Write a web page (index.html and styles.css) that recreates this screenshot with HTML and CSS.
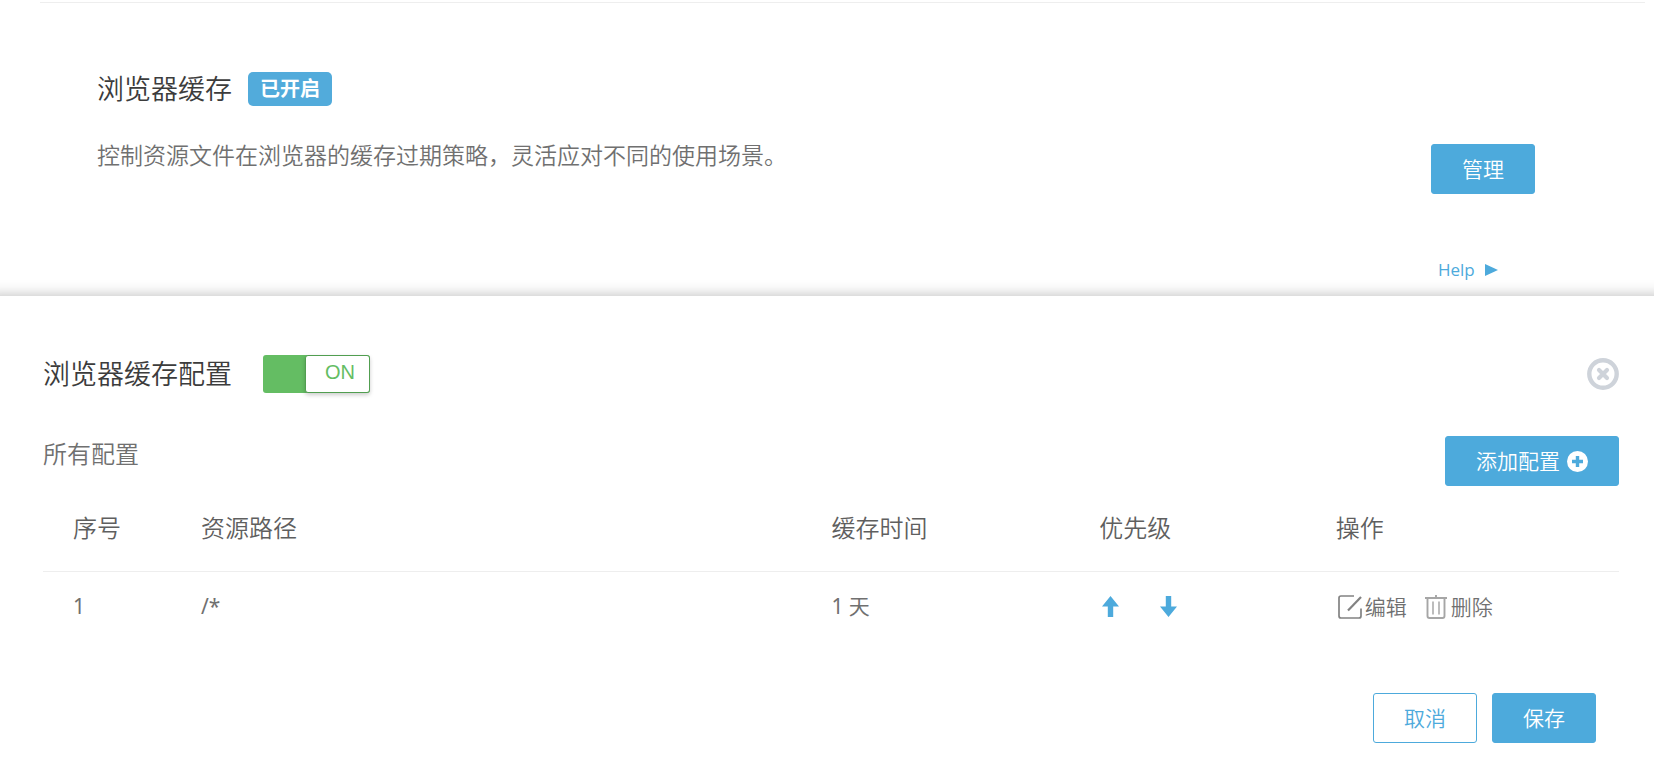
FILE: index.html
```html
<!DOCTYPE html>
<html lang="zh-CN">
<head>
<meta charset="utf-8">
<title>浏览器缓存</title>
<link rel="stylesheet" href="styles.css">
</head>
<body>
<section class="feature">
  <div class="feature-body">
    <div class="feature-text">
      <h2 class="title">浏览器缓存 <span class="badge">已开启</span></h2>
      <p class="desc">控制资源文件在浏览器的缓存过期策略，灵活应对不同的使用场景。</p>
    </div>
    <div class="feature-actions">
      <button class="btn btn-primary" type="button">管理</button>
      <a class="help" href="#help">Help
        <svg class="help-icon" viewBox="0 0 13 12" aria-hidden="true"><path d="M0 0L13 6L0 12Z"/></svg>
      </a>
    </div>
  </div>
</section>
<section class="drawer">
  <header class="drawer-head">
    <h2 class="title">浏览器缓存配置</h2>
    <label class="switch">
      <input class="switch-input" type="checkbox" checked aria-label="浏览器缓存配置">
      <span class="switch-knob">ON</span>
    </label>
    <button class="close" type="button" aria-label="关闭">
      <svg class="close-icon" viewBox="0 0 32 32" aria-hidden="true"><circle cx="16" cy="16" r="13.7" stroke-width="4.4"/><path d="M12 12l8 8M20 12l-8 8" stroke-width="4.2" stroke-linecap="round"/></svg>
    </button>
  </header>
  <div class="toolbar">
    <h3 class="subtitle">所有配置</h3>
    <button class="btn btn-primary" type="button">添加配置
      <svg class="plus-icon" viewBox="0 0 21 21" aria-hidden="true"><circle cx="10.5" cy="10.5" r="10.5" fill="#fff"/><path d="M10.5 5v11M5 10.5h11" stroke="#4daadc" stroke-width="3.4"/></svg>
    </button>
  </div>
  <table class="rules">
    <thead>
      <tr>
        <th class="col-index">序号</th>
        <th class="col-path">资源路径</th>
        <th class="col-time">缓存时间</th>
        <th class="col-order">优先级</th>
        <th>操作</th>
      </tr>
    </thead>
    <tbody>
      <tr>
        <td>1</td>
        <td>/*</td>
        <td>1 天</td>
        <td>
          <div class="order">
            <button class="icon-btn" type="button" aria-label="上移"><svg class="arrow" viewBox="0 0 17 21" aria-hidden="true"><path d="M8.5 0L17 10.5H11.2V21H5.8V10.5H0Z"/></svg></button>
            <button class="icon-btn" type="button" aria-label="下移"><svg class="arrow" viewBox="0 0 17 21" aria-hidden="true"><path d="M8.5 21L17 10.5H11.2V0H5.8V10.5H0Z"/></svg></button>
          </div>
        </td>
        <td>
          <div class="ops">
            <button class="icon-btn" type="button"><svg class="op-icon" viewBox="0 0 24 24" aria-hidden="true"><path d="M16 1H3Q1 1 1 3V21Q1 23 3 23H21Q23 23 23 21V13.5" stroke="#828282" stroke-width="1.7"/><path d="M10 15.5L23 2" stroke="#828282" stroke-width="2.2"/></svg>编辑</button>
            <button class="icon-btn" type="button"><svg class="op-icon" viewBox="0 0 24 24" aria-hidden="true"><path d="M1 3H23M12 0V3M3.5 3V21Q3.5 23 5.5 23H18.5Q20.5 23 20.5 21V3" stroke="#a6a6a6" stroke-width="1.9"/><path d="M9 6.5V19.5M15 6.5V19.5" stroke="#a6a6a6" stroke-width="1.5"/></svg>删除</button>
          </div>
        </td>
      </tr>
    </tbody>
  </table>
  <footer class="drawer-foot">
    <button class="btn btn-outline" type="button">取消</button>
    <button class="btn btn-primary" type="button">保存</button>
  </footer>
</section>
</body>
</html>
```
FILE: styles.css
```css
* {
  box-sizing: border-box;
}

body {
  margin: 0;
  background: #fff;
  color: #707070;
  font-family: "Noto Sans", "Noto Sans CJK SC", sans-serif;
  font-size: 21px;
  font-weight: 350;
  line-height: 32px;
}

h2, h3, p {
  margin: 0;
  font-weight: 350;
}

button {
  font: inherit;
  cursor: pointer;
}

.title {
  display: flex;
  align-items: center;
  gap: 16px;
  color: #3c3c3c;
  font-size: 27px;
  line-height: 38px;
}

.badge {
  padding: 0 12px;
  border-radius: 5px;
  background: #52abdb;
  color: #fff;
  font-size: 20px;
  font-weight: 700;
  line-height: 34px;
}

.feature {
  margin: 2px 9px 0 40px;
  padding: 67px 110px 14px 57px;
  border-top: 1px solid #eee;
}

.feature-body {
  display: flex;
  justify-content: space-between;
}

.desc {
  margin-top: 31px;
  font-size: 23px;
  line-height: 32px;
}

.feature-actions {
  display: flex;
  flex-direction: column;
  align-items: flex-start;
  gap: 64px;
  padding-top: 74px;
}

.btn {
  display: inline-flex;
  align-items: center;
  gap: 7px;
  height: 50px;
  padding: 0 30px;
  border: 1px solid #4daadc;
  border-radius: 3px;
  font-size: 21px;
}

.btn-primary {
  background: #4daadc;
  color: #fff;
}

.btn-outline {
  background: #fff;
  color: #4daadc;
}

.plus-icon {
  width: 21px;
  height: 21px;
}

.help {
  display: flex;
  align-items: center;
  gap: 10px;
  margin-left: 7px;
  color: #4daadc;
  font-family: "Open Sans", sans-serif;
  font-size: 17px;
  font-weight: 400;
  line-height: 24px;
  text-decoration: none;
}

.help-icon {
  width: 13px;
  height: 12px;
  fill: #4daadc;
}

.drawer {
  padding: 59px 35px 22px 43px;
  background: #fff;
  box-shadow: 0 14px 14px 14px rgba(0, 0, 0, .28);
}

.drawer-head {
  display: flex;
  align-items: center;
  gap: 31px;
}

.switch {
  display: flex;
  justify-content: flex-end;
  position: relative;
  width: 107px;
  height: 38px;
  border-radius: 3px;
  background: #64bd63;
}

.switch-input {
  position: absolute;
  inset: 0;
  width: 100%;
  height: 100%;
  margin: 0;
  opacity: 0;
}

.switch-knob {
  width: 65px;
  border: 1px solid #519e50;
  border-radius: 3px;
  background: #fff;
  box-shadow: 0 2px 4px rgba(0, 0, 0, .2);
  color: #64bd63;
  font-family: "Liberation Sans", sans-serif;
  font-size: 20px;
  line-height: 32px;
  padding-left: 5px;
  text-align: center;
}

.close {
  margin-left: auto;
  padding: 0;
  border: 0;
  background: none;
}

.close-icon {
  display: block;
  width: 32px;
  height: 32px;
  fill: none;
  stroke: #ced3da;
}

.toolbar {
  display: flex;
  justify-content: space-between;
  margin-top: 43px;
}

.subtitle {
  font-size: 24px;
  line-height: 36px;
}

.rules {
  width: 100%;
  border-collapse: collapse;
  table-layout: fixed;
}

.rules th,
.rules td {
  padding: 0 0 0 30px;
  text-align: left;
}

.rules th {
  height: 85px;
  border-bottom: 1px solid #eee;
  color: #5f5f5f;
  font-size: 24px;
  font-weight: 350;
}

.rules td {
  height: 70px;
  font-weight: 400;
}

.col-index {
  width: 128px;
}

.col-path {
  width: 40%;
}

.col-time {
  width: 17%;
}

.col-order {
  width: 15%;
}

.order,
.ops {
  display: flex;
  align-items: center;
}

.order {
  gap: 41px;
  padding-left: 3px;
}

.ops {
  gap: 17px;
  padding: 2px 0 0 2px;
  font-weight: 350;
}

.icon-btn {
  display: flex;
  align-items: center;
  gap: 3px;
  padding: 0;
  border: 0;
  background: none;
  color: inherit;
}

.arrow {
  width: 17px;
  height: 21px;
  fill: #4daadc;
}

.op-icon {
  width: 24px;
  height: 24px;
  fill: none;
}

.drawer-foot {
  display: flex;
  justify-content: flex-end;
  gap: 15px;
  padding: 52px 23px 0 0;
}
```
